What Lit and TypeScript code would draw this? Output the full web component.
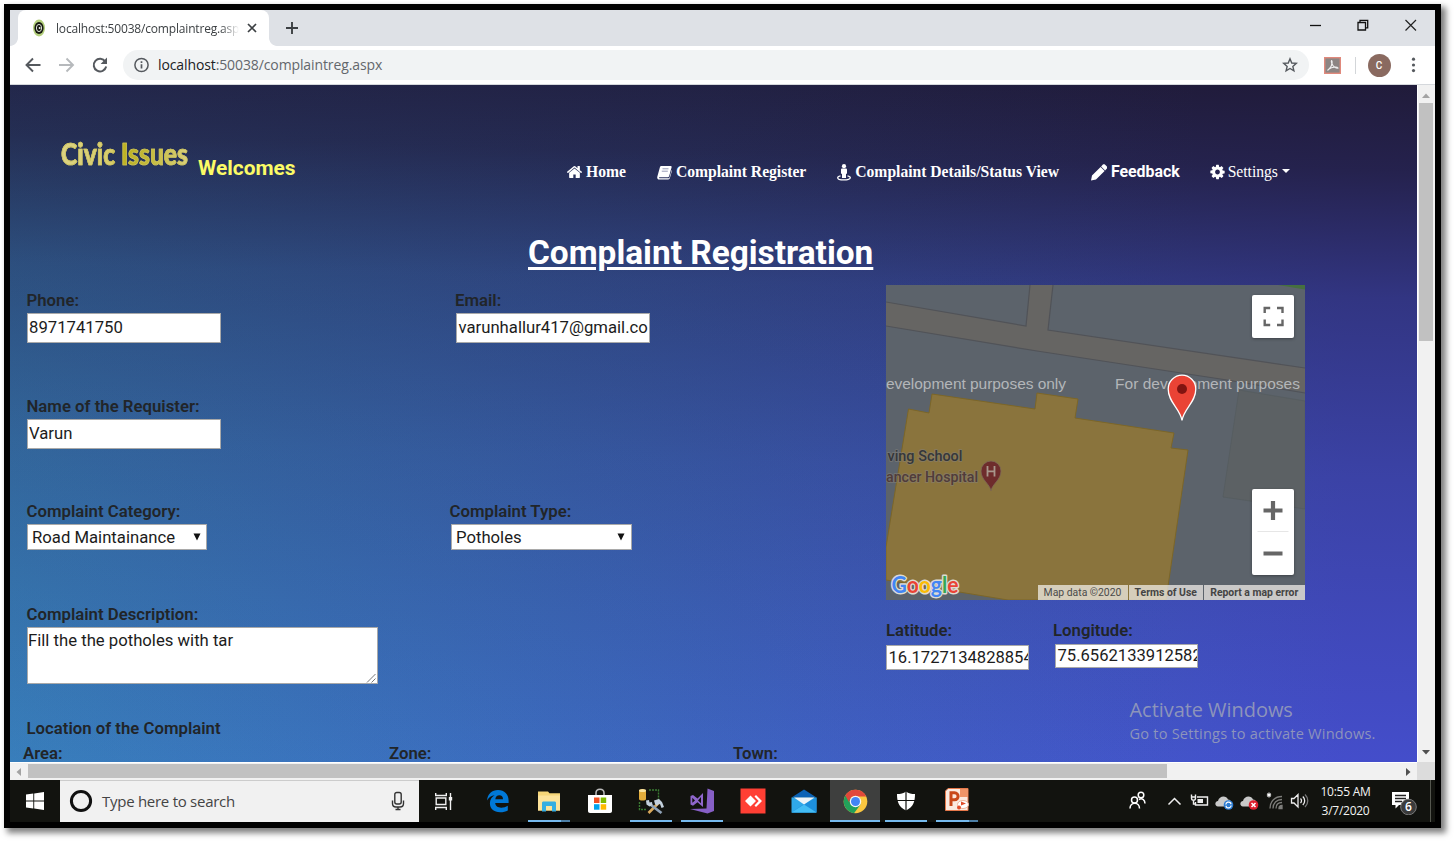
import { LitElement, html, svg, css } from "lit";
import { customElement } from "lit/decorators.js";

const HOME =
  "M1472 992v480q0 26-19 45t-45 19h-384v-384h-256v384h-384q-26 0-45-19t-19-45v-480q0-1 .5-3t.5-3l575-474 575 474q1 2 1 6zm223-69l-62 74q-8 9-21 11h-3q-13 0-21-7l-692-577-692 577q-12 8-24 7-13-2-21-11l-62-74q-8-10-7-23.5t11-21.5l719-599q32-26 76-26t76 26l244 204v-195q0-14 9-23t23-9h192q14 0 23 9t9 23v408l219 182q10 8 11 21.5t-7 23.5z";
const COG =
  "M1152 896q0-106-75-181t-181-75-181 75-75 181 75 181 181 75 181-75 75-181zm512-109v222q0 12-8 23t-20 13l-185 28q-19 54-39 91 35 50 107 138 10 12 10 25t-9 23q-27 37-99 108t-94 71q-12 0-26-9l-138-108q-44 23-91 38-16 136-29 186-7 28-36 28h-222q-14 0-24.5-8.5t-11.5-21.5l-28-184q-49-16-90-37l-141 107q-10 9-25 9-14 0-25-11-126-114-165-168-7-10-7-23 0-12 8-23 15-21 51-66.5t54-70.5q-27-50-41-99l-183-27q-13-2-21-12.5t-8-23.5v-222q0-12 8-23t19-13l186-28q14-46 39-92-40-57-107-138-10-12-10-24 0-10 9-23 26-36 98.5-107.5t94.5-71.5q13 0 26 10l138 107q44-23 91-38 16-136 29-186 7-28 36-28h222q14 0 24.5 8.5t11.5 21.5l28 184q49 16 90 37l142-107q9-9 24-9 13 0 25 10 129 119 165 170 7 8 7 22 0 12-8 23-15 21-51 66.5t-54 70.5q26 50 41 98l183 28q13 2 21 12.5t8 23.5z";

/* Browser chrome: tab strip and address bar */
@customElement("browser-bar")
export class BrowserBar extends LitElement {
  static styles = css`
    :host { display: block; font-family: "Open Sans", sans-serif; }
    svg { display: block; flex: none; }
    .strip { height: 36px; background: #dee1e6; display: flex; align-items: stretch; }
    .lip { width: 8px; background: radial-gradient(circle at 0 0, #dee1e6 7.5px, #fff 8.2px) 0 28px / 8px 8px no-repeat; }
    .lip.end { background: radial-gradient(circle at 8px 0, #dee1e6 7.5px, #fff 8.2px) 0 28px / 8px 8px no-repeat; }
    .tab { box-sizing: border-box; width: 251px; background: #fff; border-radius: 8px 8px 0 0; display: flex; align-items: center; padding: 0 10px 0 14px; }
    .title { margin-left: 10px; width: 183px; font-size: 12px; letter-spacing: -0.18px; color: #3c4043; white-space: nowrap; overflow: hidden; -webkit-mask-image: linear-gradient(to right, #000 165px, transparent 183px); }
    .close { margin-left: 8px; }
    .plus { align-self: center; margin-left: 8px; }
    .win { margin-left: auto; display: flex; gap: 34px; padding: 8px 17px 0 0; align-items: flex-start; }
    .bar { height: 39px; background: #fff; display: flex; align-items: center; padding: 0 18px 0 14px; border-bottom: 1px solid #d5d8dc; box-sizing: border-box; }
    .nav { display: flex; gap: 15.500px; }
    .omni { margin-left: 14px; width: 1185.500px; box-sizing: border-box; height: 30px; border-radius: 15px; background: #f1f3f4; display: flex; align-items: center; padding: 0 11px 0 11px; }
    .url { margin-left: 9px; font-size: 14px; letter-spacing: -0.11px; color: #63676c; flex: 1; line-height: 20px; }
    .url b { font-weight: 400; color: #202124; }
    .pdf { margin-left: 15px; }
    .sep { width: 1px; height: 17px; background: #d3d6d9; margin: 0 12px 0 14px; }
    .avatar { width: 23px; height: 23px; border-radius: 50%; background: #8a6a60; color: #fff; font: 500 10px/23px Roboto, sans-serif; text-align: center; }
    .dots { margin-left: 20px; }
  `;
  render() {
    return html`
      <div class="strip">
        <span class="lip"></span>
        <div class="tab">
          <svg width="14" height="18"><ellipse cx="7" cy="9" rx="6" ry="8.400" fill="#b3cf7c"/><ellipse cx="7" cy="9" rx="4.600" ry="6" fill="#15170f"/><ellipse cx="7" cy="9" rx="2.600" ry="3.600" fill="none" stroke="#dde3d8" stroke-width="1"/><circle cx="7.600" cy="9" r="1" fill="#eee"/></svg>
          <span class="title">localhost:50038/complaintreg.asp</span>
          <svg class="close" width="10" height="10"><path d="M1 1l8 8M9 1L1 9" stroke="#3c4043" stroke-width="1.700"/></svg>
        </div>
        <span class="lip end"></span>
        <svg class="plus" width="14" height="14"><path d="M7 1v12M1 7h12" stroke="#3c4043" stroke-width="1.900"/></svg>
        <div class="win">
          <svg width="14" height="16"><path d="M2 7.500h11" stroke="#111" stroke-width="1.300"/></svg>
          <svg width="14" height="16" fill="none" stroke="#111" stroke-width="1.300"><path d="M2 4.500h7.500v7.500H2zM4 4.500V2.300h7.700v7.500H9.700"/></svg>
          <svg width="14" height="16"><path d="M1.500 2l10.500 10.500M12 2L1.500 12.500" stroke="#222" stroke-width="1.200"/></svg>
        </div>
      </div>
      <div class="bar">
        <div class="nav">
          <svg width="18" height="18" fill="none" stroke="#55595e" stroke-width="1.900"><path d="M16.500 9H3M9 2.500L2.500 9L9 15.500"/></svg>
          <svg width="18" height="18" fill="none" stroke="#b6b9bc" stroke-width="1.900"><path d="M1 9h13.500M8.500 2.500L15 9l-6.500 6.500"/></svg>
          <svg width="18" height="18"><path d="M14.300 5.600A6.300 6.300 0 1 0 15.200 10.600" fill="none" stroke="#55595e" stroke-width="2"/><path d="M16 1.500v6.400H9.600z" fill="#55595e"/></svg>
        </div>
        <div class="omni">
          <svg width="15" height="16" fill="none" stroke="#55595e" stroke-width="1.500"><circle cx="7.500" cy="8" r="6.600"/><path d="M7.500 7.200v4.300M7.500 4.300v1.700" stroke-width="1.700"/></svg>
          <span class="url"><b>localhost</b>:50038/complaintreg.aspx</span>
          <svg width="16" height="16"><path d="M8 1.800l1.750 4.200 4.550.4-3.450 3 1.050 4.450L8 11.500l-3.900 2.350 1.050-4.450-3.450-3 4.550-.4z" fill="none" stroke="#55595e" stroke-width="1.400"/></svg>
        </div>
        <svg class="pdf" width="17" height="17"><rect x=".7" y=".7" width="15.600" height="15.600" fill="#8c8583" stroke="#e0897c" stroke-width="1.400"/><path d="M3.500 13.500C6.500 11 8.500 7 8 4.200 7.500 2.500 6.500 5 9 8.500c1.500 2 3.500 3 5 2.500-1-1.500-6-1-9 1" fill="none" stroke="#eee" stroke-width="1.200"/></svg>
        <span class="sep"></span>
        <span class="avatar">C</span>
        <svg class="dots" width="5" height="16" fill="#55595e"><circle cx="2.500" cy="2.200" r="1.600"/><circle cx="2.500" cy="8" r="1.600"/><circle cx="2.500" cy="13.600" r="1.600"/></svg>
      </div>`;
  }
}

/* Map with its controls */
@customElement("site-map")
export class SiteMap extends LitElement {
  static styles = css`
    :host { display: block; position: relative; width: 418.5px; height: 315px; overflow: hidden; background: #5c636b; }
    svg { display: block; }
    .ctl { position: absolute; right: 10.500px; width: 42px; background: #fff; border-radius: 2px; box-shadow: 0 1px 3px rgba(0,0,0,.35); }
    .full { top: 10px; height: 42.500px; }
    .zoom { top: 204px; height: 85.500px; }
    .legal { position: absolute; right: 0; bottom: 0; height: 15px; display: flex; gap: 1px; font: 10.400px/15px Roboto, sans-serif; color: #4a4a4a; white-space: nowrap; }
    .legal span { background: rgba(240,238,232,.74); text-align: center; }
    .legal b { font-weight: 700; color: #444; }
    .a { width: 90px; } .b { width: 74.500px; } .c { width: 100.500px; }
  `;
  render() {
    return html`
      <svg width="419" height="315" viewBox="0 0 419 315">
        <path d="M353 105L419 116v108L337 212z" fill="#5c6164" stroke="#555b5f" stroke-width=".7"/>
        <path d="M0 17L140 41 144 0h23l-5 45 257 38v24L341 95 151 66 0 41z" fill="#666563"/>
        <path d="M0 17L140 41 144 0M167 0l-5 45 257 38M0 41L151 66 341 95l78 13" fill="none" stroke="#515358" stroke-width="1.200"/>
        <path d="M392 0h27v4.500z" fill="#46703f"/>
        <path d="M22.500 124L43 128 46 109 149 124 151 108 192 114 189 133 288 148 285 163 302 165 280 315H122L0 295V262z" fill="#8a743d" stroke="#7c6628" stroke-width="1"/>
        <g font-family="Liberation Sans, sans-serif" font-size="15.500" fill="#b3b6b9">
          <text x="0" y="104" textLength="180">evelopment purposes only</text>
          <text x="229" y="104" textLength="185">For development purposes</text>
        </g>
        <g font-family="Roboto, sans-serif" font-size="15.200" stroke="#85817a" stroke-opacity=".55" stroke-width="2" paint-order="stroke" stroke-linejoin="round">
          <text x="1.500" y="176" textLength="75" lengthAdjust="spacingAndGlyphs" font-weight="500" fill="#35373a">ving School</text>
          <text x="0" y="197" font-weight="500" fill="#503c3a" textLength="92" lengthAdjust="spacingAndGlyphs">ancer Hospital</text>
        </g>
        <path d="M105 206c-1-7-10-11-10-20a10 10 0 1 1 20 0c0 9-9 13-10 20z" fill="#6e2c2c" stroke="#7d6a55" stroke-width=".8"/>
        <path d="M101.500 181v10.500M108.500 181v10.500M101.500 186.300h7" stroke="#a8978c" stroke-width="1.800"/>
        <path d="M296 135.500c-1.800-12-13.800-18-13.800-31.500a13.800 13.800 0 0 1 27.600 0c0 13.500-12 19.500-13.800 31.500z" fill="#ea4335" stroke="#fff" stroke-width="1.300"/>
        <circle cx="296" cy="104" r="5" fill="#811411"/>
        <text x="5.500" y="307.500" font-family="Lato, sans-serif" font-weight="700" font-size="22" textLength="67" lengthAdjust="spacingAndGlyphs" stroke="#dddbd3" stroke-width="2.800" paint-order="stroke" stroke-linejoin="round"><tspan fill="#4285f4">G</tspan><tspan fill="#ea4335">o</tspan><tspan fill="#fbbc05">o</tspan><tspan fill="#4285f4">g</tspan><tspan fill="#34a853">l</tspan><tspan fill="#ea4335">e</tspan></text>
      </svg>
      <div class="ctl full"><svg width="42" height="42" fill="none" stroke="#666" stroke-width="2.400"><path d="M12.700 18v-5h5.500M25 13h5.500v5M30.500 24.500v5.500H25M18.200 30h-5.500v-5.500"/></svg></div>
      <div class="ctl zoom"><svg width="42" height="85"><path d="M11.500 21.500h19M21 12v19M11.500 64.500h19" stroke="#666" stroke-width="4.200"/><path d="M5.500 42.500h31" stroke="#e6e6e6"/></svg></div>
      <div class="legal"><span class="a">Map data ©2020</span><span class="b"><b>Terms of Use</b></span><span class="c"><b>Report a map error</b></span></div>`;
  }
}

/* Complaint registration page */
@customElement("complaint-page")
export class ComplaintPage extends LitElement {
  static styles = css`
    :host { display: block; box-sizing: border-box; position: relative; width: 1407px; height: 677px; overflow: hidden; font-family: Roboto, sans-serif;
      background:
        linear-gradient(to right, rgba(42,74,122,.16), rgba(42,74,122,.1) 50%, rgba(42,74,122,0) 85%),
        linear-gradient(181.500deg, rgba(32,27,58,1) 0%, rgba(32,27,58,.87) 12%, rgba(33,30,62,.53) 30%, rgba(34,34,64,.29) 55%, rgba(34,34,64,.15) 76%, rgba(34,34,64,0) 100%),
        linear-gradient(to right, #3b88c8, #3f6fca 40%, #4262cc 60%, #454fcf 95%); }
    svg { display: block; flex: none; }
    header { display: flex; height: 105px; padding: 0 0 0 51px; box-sizing: border-box; color: #fff; }
    .brand { width: 137px; margin-top: 50px; height: 38px; }
    .brand span { display: block; width: max-content; white-space: nowrap; font: 900 29.500px/38px Lato, sans-serif; -webkit-text-stroke: .7px #d0c65e; transform: scaleX(.835); transform-origin: 0 0; background: linear-gradient(to right, #dcd383, #d8cc6a 40%, #bcb120 46%, #c3b938 68%, #d9d07c); -webkit-background-clip: text; background-clip: text; color: transparent; }
    .hello { width: 369px; margin-top: 71px; font: 700 20.900px/24px Roboto, sans-serif; color: #fbfb66; }
    nav { display: flex; gap: 31px; margin-top: 76px; height: 22px; align-items: center; font: 700 15.650px/22px "Liberation Serif", serif; letter-spacing: -.02px; white-space: nowrap; }
    nav span { display: flex; align-items: center; gap: 4px; }
    .fb { font: 700 15.900px/20px Roboto, sans-serif; margin-left: 1px; }
    .set { font-weight: 400; gap: 3px; margin-left: -1px; }
    .caret { border: 4.500px solid transparent; border-top-color: #fff; border-bottom: 0; margin: 0 0 3px 1px; }
    h1 { margin: 42px 0 0 518px; font-size: 33.400px; line-height: 42px; font-weight: 700; color: #fff; text-decoration: underline; text-decoration-thickness: 3px; text-underline-offset: 3px; height: 42px; white-space: nowrap; }
    .body { display: flex; margin-top: 11px; }
    .left { width: 876px; padding-top: 4px; }
    .row { display: grid; grid-template-columns: 423px 1fr; padding-left: 16.500px; }
    .r1 { height: 106px; } .r2 { height: 105px; } .r3 { height: 103px; } .r4 { height: 114px; } .r5 { height: 25px; }
    .area { display: grid; grid-template-columns: 366px 344px 1fr; padding-left: 13px; }
    label { display: block; font-size: 16.750px; line-height: 22px; height: 24px; font-weight: 600; color: #212529; white-space: nowrap; }
    .in { box-sizing: border-box; border: 1px solid #a9a9a9; background: #fff; color: #1c1c1c; font-size: 16.700px; white-space: nowrap; overflow: hidden; }
    .text { width: 194px; height: 30px; line-height: 27px; padding: 0 1.500px; }
    .sel { width: 180.500px; height: 26px; line-height: 25px; padding: 0 4.500px; display: flex; justify-content: space-between; align-items: center; }
    .sel svg { margin-right: 1px; }
    .area-in { width: 351px; height: 57px; line-height: 25px; padding: 0 .5px; display: flex; justify-content: space-between; }
    .area-in svg { align-self: flex-end; }
    .email { margin: 0 0 0 5.500px; }
    .email .in { margin-left: 1px; }
    .type .in { margin-left: 1.500px; padding-left: 4px; }
    .coords { display: flex; margin-top: 18.500px; gap: 24px; }
    .coords .in { width: 143px; height: 25px; line-height: 23px; padding: 0 1.500px; font-size: 16.600px; }
    .lat .in { margin-top: 2.500px; } .lon .in { margin: 1px 0 0 2px; line-height: 22px; height: 24.500px; }
    .activate { position: absolute; left: 1119.500px; top: 612px; font-family: "Open Sans", sans-serif; color: rgba(163,168,184,.78); white-space: nowrap; }
    .big { font-size: 20px; line-height: 26px; letter-spacing: -.05px; }
    .small { font-size: 14.600px; line-height: 21px; letter-spacing: .2px; }
  `;
  private arrow() {
    return html`<svg width="8" height="8"><path d="M.5 0.500h7L4 7.500z" fill="#111"/></svg>`;
  }
  private fa(d: string) {
    return html`<svg width="15" height="16" viewBox="90 90 1612 1612" fill="#fff">${svg`<path d=${d} fill-rule="evenodd"/>`}</svg>`;
  }
  render() {
    return html`
      <header>
        <div class="brand"><span>Civic Issues</span></div>
        <div class="hello">Welcomes</div>
        <nav>
          <span>${this.fa(HOME)}Home</span>
          <span><svg width="15" height="15" viewBox="0 0 15 15"><path d="M4.500 1h9.200c.8 0 1.100.6.9 1.200l-2.500 9c-.2.700-.7 1-1.300 1H2.600c-1 0-1 1 0 1.100h8.800c.7 0 1-.3 1.200-1L14.700 5c.3.300.3.700.2 1.100l-2 7c-.2.800-.8 1.400-1.600 1.400H2.200C.7 14.500-.1 13 .3 11.800L2.900 2.200C3.100 1.500 3.700 1 4.500 1z" fill="#fff"/><path d="M5.500 3.800h6M4.800 6.200h6" stroke="#8b8eae" stroke-width=".9"/></svg>Complaint Register</span>
          <span><svg width="14" height="17" viewBox="0 0 14 17"><circle cx="7" cy="2.200" r="2.100" fill="#fff"/><path d="M5.200 4.500h3.600c.9 0 1.200.6 1.200 1.300V9c0 .6-.4.900-1 .9V14H5V9.900c-.6 0-1-.3-1-.9V5.800c0-.7.300-1.300 1.200-1.300z" fill="#fff"/><path d="M3.500 11.800C1.800 12.200.7 12.900.7 13.700c0 1.300 2.800 2.200 6.300 2.200s6.300-.9 6.300-2.200c0-.8-1.100-1.500-2.800-1.900" fill="none" stroke="#fff" stroke-width="1.300"/></svg>Complaint Details/Status View</span>
          <span class="fb"><svg width="16" height="17" viewBox="0 0 16 17"><path d="M0 16.500l1-5L9.600 2.900l4 4L5 15.500zM10.100 2.400l1.800-1.800c.6-.6 1.400-.6 2 0l2 2c.6.600.6 1.400 0 2l-1.800 1.800z" fill="#fff"/></svg>Feedback</span>
          <span class="set">${this.fa(COG)}Settings<i class="caret"></i></span>
        </nav>
      </header>
      <h1>Complaint Registration</h1>
      <div class="body">
        <div class="left">
          <div class="row r1">
            <div><label>Phone:</label><div class="in text">8971741750</div></div>
            <div class="email"><label>Email:</label><div class="in text">varunhallur417@gmail.co</div></div>
          </div>
          <div class="row r2"><div><label>Name of the Requister:</label><div class="in text">Varun</div></div></div>
          <div class="row r3">
            <div><label>Complaint Category:</label><div class="in sel">Road Maintainance${this.arrow()}</div></div>
            <div class="type"><label>Complaint Type:</label><div class="in sel">Potholes${this.arrow()}</div></div>
          </div>
          <div class="row r4"><div><label>Complaint Description:</label>
            <div class="in area-in">Fill the the potholes with tar<svg width="10" height="10"><path d="M1 9.500L9.500 1M5.500 9.500l4-4" stroke="#777" stroke-width="1"/></svg></div></div></div>
          <div class="row r5"><label>Location of the Complaint</label></div>
          <div class="area"><label>Area:</label><label>Zone:</label><label>Town:</label></div>
        </div>
        <div>
          <site-map></site-map>
          <div class="coords">
            <div class="lat"><label>Latitude:</label><div class="in">16.1727134828854</div></div>
            <div class="lon"><label>Longitude:</label><div class="in">75.6562133912582</div></div>
          </div>
        </div>
      </div>
      <div class="activate"><div class="big">Activate Windows</div><div class="small">Go to Settings to activate Windows.</div></div>`;
  }
}

/* Windows taskbar */
@customElement("task-bar")
export class TaskBar extends LitElement {
  static styles = css`
    :host { display: flex; height: 42px; background: #12130f; font-family: "Open Sans", sans-serif; }
    svg { display: block; flex: none; }
    .start { width: 50px; display: grid; place-items: center; }
    .search { width: 359px; box-sizing: border-box; background: #f1f1f1; display: flex; align-items: center; padding: 0 14.500px 1px 9px; border-top: 1px solid #ccc; }
    .search span { flex: 1; margin-left: 9px; font-size: 15px; letter-spacing: -.27px; color: #444; padding-bottom: 1px; }
    .view { width: 49px; padding-right: 4px; display: grid; place-items: center; }
    .app { width: 51px; display: grid; place-items: center; position: relative; }
    .app svg { margin-bottom: 1px; }
    .app.active { background: #3e3f3e; width: 50px; margin: 0 0 0 1px; }
    .app.active svg { margin-right: 1px; }
    .run { position: absolute; left: 4.500px; bottom: 0; width: 42px; height: 2.500px; background: #76b9ed; }
    .active .run { left: 0; width: 50px; }
    .split .run { background: linear-gradient(to right, #76b9ed 33px, #4d7ea6 33px); }
    .tray { margin-left: auto; display: flex; align-items: center; }
    .people { margin-right: 12px; }
    .clock { width: 67px; text-align: center; color: #f3f3f3; font-size: 12px; line-height: 19px; letter-spacing: -.27px; padding-bottom: 1px; }
    .note { margin-left: 12px; }
    .edge { width: 1px; height: 42px; margin: 0 4px 0 11px; background: #55574f; }
  `;
  private app(icon: unknown, cls = "", run = true) {
    return html`<div class="app ${cls}"><svg width="28" height="28" viewBox="0 0 28 28">${icon}</svg>${run ? html`<span class="run"></span>` : ""}</div>`;
  }
  render() {
    return html`
      <div class="start"><svg width="18" height="18" fill="#fff"><path d="M0 2.600L7.300 1.500V8.500H0zM8.200 1.400L18 0v8.500H8.200zM0 9.500h7.300v7L0 15.400zM8.200 9.500H18V18l-9.800-1.400z"/></svg></div>
      <div class="search">
        <svg width="24" height="24"><circle cx="12" cy="12" r="9.600" fill="none" stroke="#111" stroke-width="3"/></svg>
        <span>Type here to search</span>
        <svg width="14" height="20" fill="none" stroke="#333" stroke-width="1.400"><rect x="3.800" y="1.500" width="6.400" height="11.500" rx="2"/><path d="M1.500 9.500v3c0 2 1.500 3.500 3.500 3.500h4c2 0 3.500-1.500 3.500-3.500v-3M7 16v2.500M4.500 18.500h5"/></svg>
      </div>
      <div class="view"><svg width="19" height="19" fill="none" stroke="#f0f0f0" stroke-width="1.400"><path d="M1.700 1v2.500h10.600V1M2.200 6h9.600v6.500H2.200zM1.700 18v-2.500h10.600V18M16.500 1v17"/><path d="M16.500 5v3.500" stroke-width="3.400"/></svg></div>
      ${this.app(svg`<path d="M3 13.500C3.600 7 8 3 14 3c6.500 0 10.600 4.300 10.600 10.500v2.600H11.200c.2 3 2.600 4.600 6 4.600 2.400 0 4.700-.7 6.600-1.900v4.600c-2 1.200-4.600 1.800-7.600 1.800-6.400 0-10.300-3.600-10.300-9 0-3.400 1.800-6.300 4.700-8C7.600 8.400 4.600 10.500 3 13.500zm8.300-1.200h7.700c0-2.500-1.300-4-3.700-4-2.200 0-3.700 1.600-4 4z" fill="#0078d7" fill-rule="evenodd"/>`, "", false)}
      ${this.app(svg`<path d="M3 4.500h10l1.500 1.800H25V23.500H3z" fill="#f6d678"/><path d="M3 8.500h22v15H3z" fill="#fde39a"/><path d="M7 24.500v-8.500c0-1 .6-1.500 1.500-1.500h11c1 0 1.500.5 1.500 1.500v8.500h-4V19h-6v5.500z" fill="#35aee2"/>`, "split")}
      ${this.app(svg`<path d="M10 8V6c0-5 8-5 8 0v2" fill="none" stroke="#bbb" stroke-width="1.500"/><path d="M2 8h24v16c0 1.200-.8 2-2 2H4c-1.200 0-2-.8-2-2z" fill="#fff"/><path d="M8 10.500h5.500V16H8z" fill="#f25022"/><path d="M14.700 10.500h5.500V16h-5.500z" fill="#7fba00"/><path d="M8 17.200h5.500v5.500H8z" fill="#00a4ef"/><path d="M14.700 17.200h5.500v5.500h-5.500z" fill="#ffb900"/>`, "", false)}
      ${this.app(svg`<path d="M2 4c0-2.500 7-2.500 7 0v8c0 2-7 2-7 0z" fill="#e2ad3b"/><ellipse cx="5.500" cy="3.600" rx="3.500" ry="1.500" fill="#f8e3a0"/><path d="M12 3h9.500V13M2.500 15v7.500H10" fill="none" stroke="#3a7d33" stroke-width="1.400" stroke-dasharray="2 1"/><path d="M11.500 26L22 15.500" stroke="#d9a95c" stroke-width="2.600"/><path d="M12 16.500l12.500 9.500" stroke="#8fa3b8" stroke-width="2.800"/><path d="M9 13.500l3-.500.5 2.500 2.500-.500.500 3-3 1.500-3-2zM17 13.500l5-1.500 3 3 2 5-2.500 1-1.500-4-2 .5-1 1.500-2-2z" fill="#c3d0dc"/>`)}
      ${this.app(svg`<path d="M19.500 1.500L26 4v20l-6.500 2.500L2 22l16.500-.500z" fill="#865fc5"/><path d="M2.500 9L5 8l4.500 3.600L15 6v14l-5.500-4.700L5 18.800 2.500 17.500zM4.300 10.800v5l2.700-2.400zM13 10v6.300l-3-2.900z" fill="#8f66cc" fill-rule="evenodd"/>`)}
      ${this.app(svg`<path d="M1.500 1.500h25v25h-25z" fill="#ff3f34"/><path d="M11.500 8.500L17 14l-5.500 5.500L6 14zM15.500 9.500l1.500-1.400 6 5.900-6 5.900-1.500-1.400 4.200-4.500z" fill="#fff"/>`, "", false)}
      ${this.app(svg`<path d="M1.500 10.500L14 2.500l12.500 8z" fill="#0b62b5"/><path d="M1.500 10.500h25v15h-25z" fill="#2fa8ea"/><path d="M1.500 25.500L14 17l12.500-6.500v15z" fill="#1d8fdc"/><path d="M1.500 25.500l12.500-8 12.500 8z" fill="#43bdf5"/><path d="M4 10.500h20.500L14 17.500z" fill="#eef4f8"/>`, "", false)}
      ${this.app(svg`<circle cx="14.500" cy="14.500" r="11.800" fill="#fbc740"/><path d="M14.500 14.500L4.300 8.600A11.800 11.800 0 0 0 13 26.200L19.600 17.500z" fill="#22a15a"/><path d="M4.300 8.600A11.800 11.800 0 0 1 25.200 9.500H14.500a5 5 0 0 0-5.100 7.900z" fill="#e0483b"/><circle cx="14.500" cy="14.500" r="5.700" fill="#f6f6f6"/><circle cx="14.500" cy="14.500" r="4.500" fill="#4285f4"/>`, "active")}
      ${this.app(svg`<path d="M14 4.500c2.500 1.800 5.500 2.500 9 2.600 0 7.500-1.500 13-9 16.500C6.500 20.100 5 14.600 5 7.100c3.500-.1 6.500-.8 9-2.600z" fill="#fff"/><path d="M14 4v20M5 13.500h18" stroke="#12130f" stroke-width="1.200"/>`)}
      ${this.app(svg`<path d="M5 1.500h20v22H2.500V4z" fill="#fbe9df" stroke="#e6784a" stroke-width="1"/><path d="M17 2h8v8h-8z" fill="#ef9468"/><ellipse cx="20" cy="17.500" rx="5.500" ry="4" fill="#fff" stroke="#f0b49a"/><path d="M18 14.500l5 2-5 2z" fill="#e24d2a"/><circle cx="16" cy="20.500" r="2" fill="#e24d2a"/><path d="M8 19V5.800h3.500c4.800 0 4.800 7 0 7H8" fill="none" stroke="#c9481a" stroke-width="3"/>`, "split")}
      <div class="tray">
        <svg class="people" width="24" height="24" fill="none" stroke="#fff" stroke-width="1.500"><circle cx="8.500" cy="11" r="3"/><path d="M4 19.500c0-7 9.500-7 9.500 0"/><circle cx="15" cy="6" r="2.800"/><path d="M13 10.500c3-1.800 6 .3 6 4"/></svg>
        <svg width="25" height="24"><path d="M6.500 15.500L12.500 9.500l6 6" fill="none" stroke="#eee" stroke-width="1.500"/></svg>
        <svg width="25" height="24" fill="none" stroke="#eee" stroke-width="1.400"><path d="M10 8h10.500v8H8.500V13"/><path d="M10.500 10h5.500v4h-5.500z" fill="#eee" stroke="none"/><path d="M4.500 5.500v3.500c0 3 4 3 4 0V5.500M3.800 8h5.400M6.500 11v4h2"/></svg>
        <svg width="25" height="24"><path d="M6 17.500c-3.500-.5-3.500-5 0-5.500 1-5.500 8.500-6 10-1.500 4 0 4.500 6.500 0 7z" fill="#c9c9c9"/><circle cx="16.500" cy="16" r="4.800" fill="#2c7cd3"/><path d="M13.800 15.500a2.800 2.800 0 0 1 5-1.300v1.100M19.200 16.500a2.800 2.800 0 0 1-5 1.300v-1.100" fill="none" stroke="#fff" stroke-width="1.300"/></svg>
        <svg width="25" height="24"><path d="M6 17.500c-3.500-.5-3.500-5 0-5.500 1-5.500 8.500-6 10-1.500 4 0 4.500 6.500 0 7z" fill="#c9c9c9"/><circle cx="16.500" cy="16" r="4.800" fill="#dc1f2e"/><path d="M14.500 14l4 4m0-4l-4 4" stroke="#fff" stroke-width="1.500"/></svg>
        <svg width="25" height="24" fill="none" stroke="#7d7d7a" stroke-width="1.300"><path d="M8 19.500C8 12 13 7.500 20 7.500M11 19.500c0-5.500 3.500-9 9-9M14 19.500c0-3.500 2.200-6 6-6"/><path d="M17 19.500c0-2 1-3 3-3v3z" fill="#7d7d7a"/><path d="M7 3.500v5M5 4.700l4 2.600M9 4.700L5 7.300" stroke="#fff" stroke-width="1.100"/></svg>
        <svg width="25" height="24" fill="none" stroke="#eee" stroke-width="1.300"><path d="M4.500 9.500H7l4-4v12.500l-4-4H4.500zM13.500 9.500c1.300 1.200 1.300 3.300 0 4.500M15.800 7.500c2.500 2.300 2.500 6.200 0 8.500"/><path d="M18 5.500c3.700 3.500 3.700 9 0 12.500" stroke="#777"/></svg>
        <div class="clock">10:55 AM<br>3/7/2020</div>
        <svg class="note" width="28" height="28"><path d="M1 5h17v13H8l-3.500 3.500V18H1z" fill="#fff"/><path d="M4 8.500h11M4 11.500h11M4 14.500h7" stroke="#222" stroke-width="1.300"/><circle cx="17.500" cy="20" r="7.800" fill="#3b3b3b" stroke="#777" stroke-width="1"/><text x="17.500" y="24.300" text-anchor="middle" font-family="Open Sans, sans-serif" font-weight="600" font-size="12" fill="#fff">6</text></svg>
        <span class="edge"></span>
      </div>`;
  }
}

@customElement("app-root")
export class AppRoot extends LitElement {
  static styles = css`
    :host { display: block; box-sizing: border-box; width: 1454px; height: 841px; padding: 4px 0 0 4px; background: #fff; overflow: hidden; }
    .frame { box-sizing: border-box; width: 1437px; height: 824px; border: 6px solid #000; box-shadow: 4px 4px 6px 1px rgba(0,0,0,.5); }
    .view { display: grid; grid-template-columns: 1407px 18px; grid-template-rows: 677px 18px; background: #f1f1f1; }
    .v { display: flex; flex-direction: column; align-items: center; box-sizing: border-box; padding: 8px 1px 7px 0; border-left: 1px solid #fff; }
    .v .thumb { width: 14px; height: 238px; margin: 5px 0 auto; background: #c1c1c1; }
    .h { display: flex; align-items: center; box-sizing: border-box; padding: 0 6px; border-top: 1px solid #fff; }
    .h .thumb { height: 14px; width: 1139px; margin: 0 auto 1px 7px; background: #c1c1c1; }
    .corner { background: #dcdcdc; }
    svg { display: block; flex: none; }
  `;
  render() {
    return html`
      <div class="frame">
        <browser-bar></browser-bar>
        <div class="view">
          <complaint-page></complaint-page>
          <div class="v">
            <svg width="8" height="5"><path d="M0 5L4 .500 8 5z" fill="#a3a3a3"/></svg>
            <div class="thumb"></div>
            <svg width="8" height="5"><path d="M0 0h8L4 4.500z" fill="#505050"/></svg>
          </div>
          <div class="h">
            <svg width="5" height="8"><path d="M5 0v8L.500 4z" fill="#a3a3a3"/></svg>
            <div class="thumb"></div>
            <svg width="5" height="8"><path d="M0 0v8l4.500-4z" fill="#505050"/></svg>
          </div>
          <div class="corner"></div>
        </div>
        <task-bar></task-bar>
      </div>`;
  }
}
